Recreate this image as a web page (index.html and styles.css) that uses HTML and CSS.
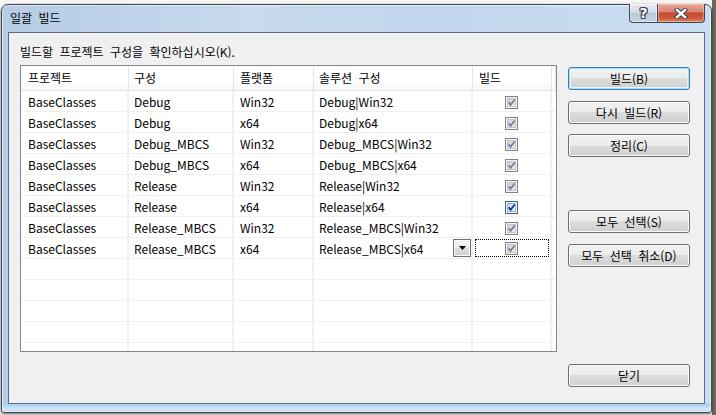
FILE: index.html
```html
<!DOCTYPE html>
<html lang="ko">
<head>
<meta charset="utf-8">
<title>일괄 빌드</title>
<link rel="stylesheet" href="styles.css">
</head>
<body>
<svg class="defs" width="0" height="0" aria-hidden="true">
  <defs>
    <linearGradient id="gdis" x1="0" y1="0" x2="1" y2="1">
      <stop offset="0" stop-color="#cfcfcf"/>
      <stop offset="1" stop-color="#f0f0f0"/>
    </linearGradient>
    <linearGradient id="gon" x1="0" y1="0" x2="1" y2="1">
      <stop offset="0" stop-color="#b9d8f2"/>
      <stop offset="1" stop-color="#eaf4fd"/>
    </linearGradient>
  </defs>
  <symbol id="cb-dis" viewBox="0 0 13 13">
    <rect x="0.5" y="0.5" width="12" height="12" fill="#f4f4f4" stroke="#828282"/>
    <rect x="2.5" y="2.5" width="8" height="8" fill="url(#gdis)" stroke="#c4c4c4"/>
    <path d="M3.6 6.3 L5.6 8.8 L9.7 3.5" fill="none" stroke="#6b7ea1" stroke-width="1.7"/>
  </symbol>
  <symbol id="cb-on" viewBox="0 0 13 13">
    <rect x="0.5" y="0.5" width="12" height="12" fill="#f2f8fe" stroke="#4f5f74"/>
    <rect x="2.5" y="2.5" width="8" height="8" fill="url(#gon)" stroke="#8fb8dd"/>
    <path d="M3.6 6.3 L5.6 8.8 L9.7 3.5" fill="none" stroke="#1b2f80" stroke-width="1.8"/>
  </symbol>
</svg>
<div class="window">
  <div class="titlebar">
    <span class="title">일괄 빌드</span>
    <div class="caps">
      <span class="cap help">?</span>
      <span class="cap close"><svg width="14" height="11" viewBox="0 0 14 11"><path d="M3 2 L11 9 M11 2 L3 9" stroke="#3b4350" stroke-width="4.4" stroke-linecap="square"/><path d="M3 2 L11 9 M11 2 L3 9" stroke="#ffffff" stroke-width="2.4" stroke-linecap="square"/></svg></span>
    </div>
  </div>
  <div class="client">
    <div class="main">
      <div class="prompt">빌드할 프로젝트 구성을 확인하십시오(K).</div>
      <div class="list">
        <div class="row head">
          <div class="c c1">프로젝트</div><div class="c c2">구성</div><div class="c c3">플랫폼</div><div class="c c4">솔루션 구성</div><div class="c c5">빌드</div><div class="c fill"></div>
        </div>
        <div class="row">
          <div class="c c1">BaseClasses</div><div class="c c2">Debug</div><div class="c c3">Win32</div><div class="c c4">Debug|Win32</div><div class="c c5 chk"><svg class="cb"><use href="#cb-dis"/></svg></div><div class="c fill"></div>
        </div>
        <div class="row">
          <div class="c c1">BaseClasses</div><div class="c c2">Debug</div><div class="c c3">x64</div><div class="c c4">Debug|x64</div><div class="c c5 chk"><svg class="cb"><use href="#cb-dis"/></svg></div><div class="c fill"></div>
        </div>
        <div class="row">
          <div class="c c1">BaseClasses</div><div class="c c2">Debug_MBCS</div><div class="c c3">Win32</div><div class="c c4">Debug_MBCS|Win32</div><div class="c c5 chk"><svg class="cb"><use href="#cb-dis"/></svg></div><div class="c fill"></div>
        </div>
        <div class="row">
          <div class="c c1">BaseClasses</div><div class="c c2">Debug_MBCS</div><div class="c c3">x64</div><div class="c c4">Debug_MBCS|x64</div><div class="c c5 chk"><svg class="cb"><use href="#cb-dis"/></svg></div><div class="c fill"></div>
        </div>
        <div class="row">
          <div class="c c1">BaseClasses</div><div class="c c2">Release</div><div class="c c3">Win32</div><div class="c c4">Release|Win32</div><div class="c c5 chk"><svg class="cb"><use href="#cb-dis"/></svg></div><div class="c fill"></div>
        </div>
        <div class="row">
          <div class="c c1">BaseClasses</div><div class="c c2">Release</div><div class="c c3">x64</div><div class="c c4">Release|x64</div><div class="c c5 chk"><svg class="cb"><use href="#cb-on"/></svg></div><div class="c fill"></div>
        </div>
        <div class="row">
          <div class="c c1">BaseClasses</div><div class="c c2">Release_MBCS</div><div class="c c3">Win32</div><div class="c c4">Release_MBCS|Win32</div><div class="c c5 chk"><svg class="cb"><use href="#cb-dis"/></svg></div><div class="c fill"></div>
        </div>
        <div class="row">
          <div class="c c1">BaseClasses</div><div class="c c2">Release_MBCS</div><div class="c c3">x64</div><div class="c c4 edit"><span>Release_MBCS|x64</span><span class="dd"><svg width="7" height="4" viewBox="0 0 7 4"><path d="M0 0 H7 L3.5 4 Z" fill="#000"/></svg></span></div><div class="c c5 chk"><span class="focus"><svg class="cb"><use href="#cb-dis"/></svg></span></div><div class="c fill"></div>
        </div>
        <div class="row"><div class="c c1"></div><div class="c c2"></div><div class="c c3"></div><div class="c c4"></div><div class="c c5"></div><div class="c fill"></div></div>
        <div class="row"><div class="c c1"></div><div class="c c2"></div><div class="c c3"></div><div class="c c4"></div><div class="c c5"></div><div class="c fill"></div></div>
        <div class="row"><div class="c c1"></div><div class="c c2"></div><div class="c c3"></div><div class="c c4"></div><div class="c c5"></div><div class="c fill"></div></div>
        <div class="row"><div class="c c1"></div><div class="c c2"></div><div class="c c3"></div><div class="c c4"></div><div class="c c5"></div><div class="c fill"></div></div>
        <div class="row"><div class="c c1"></div><div class="c c2"></div><div class="c c3"></div><div class="c c4"></div><div class="c c5"></div><div class="c fill"></div></div>
      </div>
    </div>
    <div class="buttons">
      <div class="btn default">빌드(B)</div>
      <div class="btn g11">다시 빌드(R)</div>
      <div class="btn g10">정리(C)</div>
      <div class="btn g53">모두 선택(S)</div>
      <div class="btn g11">모두 선택 취소(D)</div>
      <div class="btn g97">닫기</div>
    </div>
  </div>
</div>
</body>
</html>
```
FILE: styles.css
```css
* { box-sizing: border-box; }
html, body { margin: 0; height: 100%; }
body {
  background: linear-gradient(90deg, #f6f6f6 0, #f6f6f6 712px, #6d6b58 712px);
  font-family: "Noto Sans CJK KR", "Noto Sans", sans-serif;
  font-size: 12px;
  word-spacing: 3px;
  color: #000;
  overflow: hidden;
}
.defs { position: absolute; width: 0; height: 0; overflow: hidden; }

.window {
  margin: 4px 0 0 1px;
  width: 711px;
  height: 409px;
  border: 1px solid #3e4853;
  border-radius: 7px 7px 3px 3px;
  background:
    linear-gradient(180deg, rgba(255,255,255,0) 0, rgba(255,255,255,0) 396px, #a9d2f3 400px, #d4e8f8 404px, #bdd6ee 407px),
    linear-gradient(90deg, #b5cce5 0, #c7daee 35%, #c1d6ec 60%, #cbdff3 100%);
  box-shadow: 0 1px 3px rgba(0,0,0,.6), inset 0 0 0 1px rgba(255,255,255,.55);
  padding: 0 6px 8px 6px;
  display: flex;
  flex-direction: column;
}

.titlebar {
  height: 27px;
  display: flex;
  align-items: flex-start;
  flex: none;
}
.title {
  padding-left: 2px;
  margin-top: 5px;
  line-height: 16px;
  color: #000;
}
.caps {
  margin-left: auto;
  margin-top: -1px;
  display: flex;
}
.cap {
  height: 19px;
  border: 1px solid #3e4853;
  border-top: none;
  display: flex;
  align-items: center;
  justify-content: center;
}
.help {
  width: 28px;
  border-right: none;
  border-radius: 0 0 0 4px;
  background: linear-gradient(180deg, #e6ecf3 0, #d3dde8 45%, #b9c8d8 50%, #c5d3e2 100%);
  box-shadow: inset 0 0 0 1px rgba(255,255,255,.45);
  color: #fff;
  font: bold 14px "DejaVu Sans", sans-serif;
  text-shadow: 1px 0 0 #3b4350, -1px 0 0 #3b4350, 0 1px 0 #3b4350, 0 -1px 0 #3b4350, 1px 1px 0 #3b4350, -1px -1px 0 #3b4350, 1px -1px 0 #3b4350, -1px 1px 0 #3b4350;
}
.close {
  width: 48px;
  border-radius: 0 0 4px 0;
  background: linear-gradient(180deg, #e9a899 0, #d98573 42%, #c44a32 50%, #cf5a3c 80%, #dd8a6c 100%);
  box-shadow: inset 0 0 0 1px rgba(255,220,210,.45);
}

.client {
  height: 372px;
  flex: none;
  border: 1px solid #5f6e80;
  background: #f0f0f0;
  display: flex;
}
.main {
  margin-left: 11px;
  width: 537px;
  padding-top: 11px;
}
.prompt {
  line-height: 16px;
  height: 16px;
  margin-bottom: 5px;
  white-space: nowrap;
}
.list {
  height: 287px;
  border: 1px solid #828790;
  background: #fff;
  overflow: hidden;
}
.row {
  display: grid;
  grid-template-columns: 108px 105px 80px 159px 79px 1fr;
  height: 21px;
  border-bottom: 1px solid #f0f0f0;
}
.row.head {
  height: 25px;
  border-bottom: 1px solid #e5e5e5;
  background: linear-gradient(180deg, #ffffff 0, #ffffff 50%, #f7f8fa 100%);
}
.c {
  border-right: 2px solid #eef0f4;
  line-height: 20px;
  padding-top: 1px;
  padding-left: 6px;
  white-space: nowrap;
  overflow: hidden;
}
.head .c {
  border-right: 1px solid #e3e5e8;
  line-height: 24px;
  padding-top: 0;
}
.c1 { padding-left: 7px; }
.c2 { padding-left: 5px; }
.c4 { padding-left: 5px; }
.fill { border-right: none; padding: 0; }

.chk {
  padding: 0;
  display: flex;
  align-items: center;
  justify-content: center;
}
.cb { width: 13px; height: 13px; display: block; margin-top: 2px; }
.focus {
  margin: 1px 1px 1px 2px;
  align-self: stretch;
  flex: 1;
  border: 1px dotted #000;
  display: flex;
  align-items: center;
  justify-content: center;
}
.focus .cb { margin-top: 0; margin-left: -2px; }

.edit {
  display: flex;
  align-items: flex-start;
  padding-right: 0;
}
.dd {
  margin: 0 0 0 auto;
  width: 18px;
  height: 18px;
  border: 1px solid #707070;
  background: linear-gradient(180deg, #f4f4f4 0, #ebebeb 50%, #dddddd 50%, #d0d0d0 100%);
  box-shadow: inset 0 0 0 1px #fafafa;
  display: flex;
  align-items: center;
  justify-content: center;
}
.dd svg { display: block; }

.buttons {
  margin-left: 11px;
  width: 122px;
  padding-top: 34px;
  display: flex;
  flex-direction: column;
}
.btn {
  height: 23px;
  border: 1px solid #707070;
  border-radius: 3px;
  background: linear-gradient(180deg, #f2f2f2 0, #ebebeb 50%, #dddddd 50%, #cfcfcf 100%);
  box-shadow: inset 0 0 0 1px #fbfbfb;
  display: flex;
  align-items: center;
  justify-content: center;
  line-height: 16px;
  white-space: nowrap;
  flex: none;
}
.btn.default {
  border-color: #3c7fb1;
  box-shadow: inset 0 0 0 1px #9ee0fb, inset 0 0 0 2px #e6f6fd;
}
.g10 { margin-top: 10px; }
.g11 { margin-top: 11px; }
.g53 { margin-top: 53px; }
.g97 { margin-top: 97px; }
```
